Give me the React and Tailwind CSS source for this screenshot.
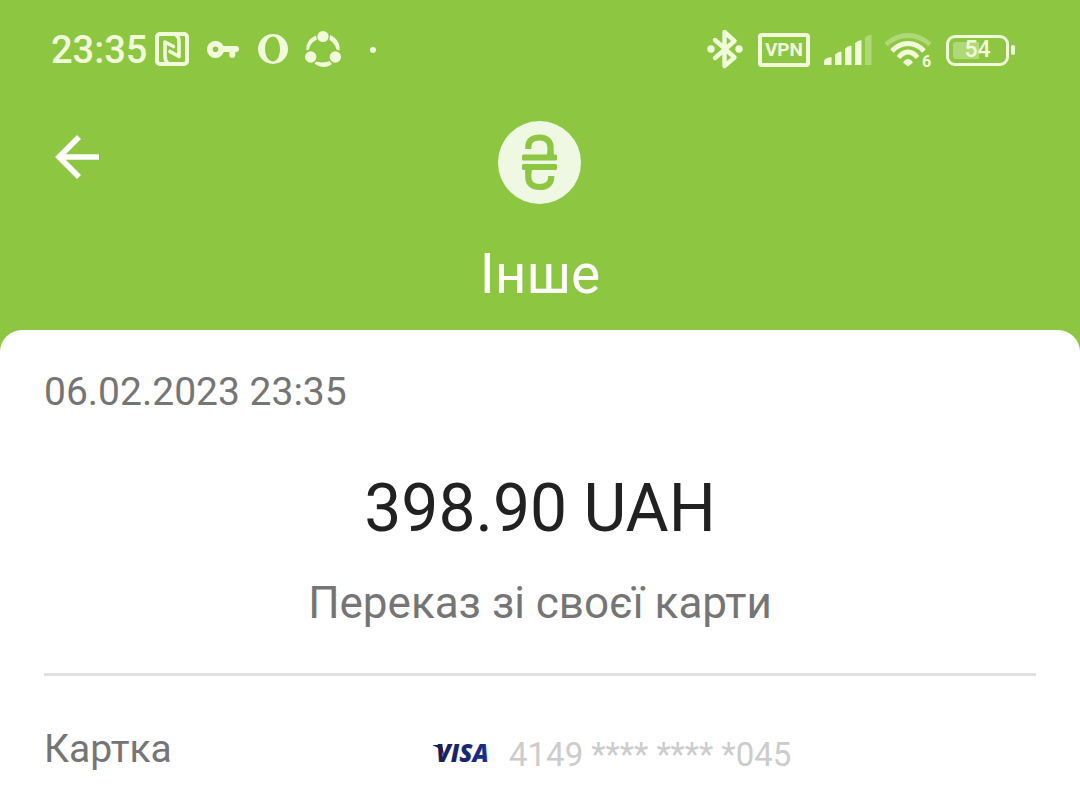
import React from "react";

const ink = "#f1fbdc";

function StatusIcon({ label, box, className, children }) {
  return (
    <svg role="img" aria-label={label} viewBox={box} className={`h-11 shrink-0 ${className}`} fill="none">
      {children}
    </svg>
  );
}

function StatusBar() {
  return (
    <div className="flex h-11 items-center justify-between pl-[51px] pr-[65px] text-[#f1fbdc]">
      <div className="flex items-center">
        <time className="mr-2 text-[38px] leading-11 font-medium">23:35</time>
        <StatusIcon label="NFC" box="155 28 34 44" className="w-[34px]">
          <g stroke={ink} strokeWidth="4" strokeLinejoin="round" strokeLinecap="round">
            <rect x="157" y="34" width="30" height="30" rx="3" />
            <path
              strokeWidth="3.600"
              d="M173.500 46.500L165 42V56Q165 61 168 63.500M170 51.500L179 56.500V42Q179 37 176 34.500"
            />
          </g>
        </StatusIcon>
        <StatusIcon label="Key" box="207 28 32 44" className="ml-[18px] w-8">
          <circle cx="215.500" cy="49.300" r="5.700" stroke={ink} strokeWidth="5.800" />
          <path d="M222 49H236M232.300 50V55" stroke={ink} strokeWidth="6" strokeLinecap="round" />
        </StatusIcon>
        <StatusIcon label="Opera" box="258 28 30 44" className="ml-[19px] w-[30px]">
          <path
            fill={ink}
            fillRule="evenodd"
            d="M273 34a15 15 0 1 0 0 30a15 15 0 1 0 0-30ZM273.500 36.500C277.800 37.500 280 43 280 49S277.800 60.500 273.500 61.500C268.500 61.500 265 56 265 49S268.500 36.500 273.500 36.500Z"
          />
        </StatusIcon>
        <StatusIcon label="Sharing" box="305 28 36 44" className="ml-[17px] w-9">
          <g fill={ink}>
            <circle cx="323" cy="36.500" r="5.600" />
            <circle cx="310.700" cy="57" r="5.700" />
            <circle cx="335.300" cy="57" r="5.700" />
            <path d="M316 35.500C309 38.500 305.500 44 306.500 50.500L309 49.500C310 45 312 42 317 39.500Z" />
            <path d="M330 35C337 38 340.500 44 339.500 50.500L336.500 49.500C335.500 45.500 333.500 42.500 329.500 40Z" />
            <path d="M314.500 63.500C320 68 327 68 332 64L329.500 61C325 62.800 321 62.800 316.500 61.500Z" />
          </g>
        </StatusIcon>
        <span className="ml-[29px] size-1.5 rounded-full bg-[#f1fbdc]" />
      </div>

      <div className="flex items-center">
        <StatusIcon label="Bluetooth" box="707 28 36 44" className="w-9">
          <path
            d="M715 40L734.500 57.500L724.500 66V32L734.500 41L715 58"
            stroke={ink}
            strokeWidth="4.400"
            strokeLinejoin="round"
            strokeLinecap="round"
          />
          <circle cx="711" cy="49" r="3.700" fill={ink} />
          <circle cx="739" cy="49" r="3.700" fill={ink} />
        </StatusIcon>
        <span className="ml-[15px] flex h-[34px] w-[52px] items-center justify-center rounded-[4px] border-4 border-[#f1fbdc] text-[19px] leading-6 font-bold">
          VPN
        </span>
        <StatusIcon label="Signal strength" box="824 28 48 44" className="ml-3.5 w-12">
          <g fill={ink}>
            <path d="M824 65V61Q825 57.500 831.500 57V65Z" />
            <path d="M835 65V54.500L837 53Q839 51.500 841.500 51.500V65Z" />
            <path d="M845 65V48.500Q848 46 851.500 45.500V65Z" />
            <path d="M855 65V43Q858 40.500 861.500 40V65Z" />
            <path d="M865 65V37.500Q868 35 871.500 34.500V65Z" opacity="0.35" />
          </g>
        </StatusIcon>
        <StatusIcon label="Wi-Fi 6" box="885 28 47 44" className="ml-[13px] w-[47px]">
          <g stroke={ink} strokeWidth="4.800">
            <path d="M886 44.500Q896 35.500 908 35.500T930 44.500" opacity="0.35" />
            <path d="M892 51Q899 43.500 908 43.500T924 51" />
            <path d="M898.500 57.500Q903 52 908 52T917.500 57.500" />
          </g>
          <path d="M903 62.500Q905 59 908 59T913 62.500L908 66.500Z" fill={ink} />
          <text x="922" y="67" fill={ink} fontFamily="Roboto, sans-serif" fontSize="16" fontWeight="700">
            6
          </text>
        </StatusIcon>
        <div className="ml-3.5 flex items-center gap-0.5">
          <span className="flex h-[31px] w-[63px] rounded-[9px] border-[3px] border-[#f1fbdc] p-1">
            <span className="flex w-full items-center justify-center rounded-[3px] bg-linear-to-r from-[#f1fbdc]/35 from-54% to-transparent to-54% text-[23px] leading-5 font-medium">
              54
            </span>
          </span>
          <span className="h-[10px] w-1 rounded-full bg-[#f1fbdc]" />
        </div>
      </div>
    </div>
  );
}

function HryvniaBadge() {
  return (
    <svg role="img" aria-label="Hryvnia" viewBox="498 121 84 84" className="size-[84px]" fill="none">
      <circle cx="539.500" cy="162.500" r="41.500" fill="#eff8e3" />
      <g stroke="#8dc641" strokeWidth="6.200">
        <path d="M528.300 149V147C528.300 140.500 532.500 137.500 539.500 137.500S550.500 141 550.500 147.500V157" />
        <path d="M528.300 167V177C528.300 183.500 532.500 187 539.500 187S551.200 183.500 551.200 177.500V176" />
      </g>
      <path d="M545 156Q548 154 547.500 151H553.500V156ZM534 168Q531 170 531.500 173H525.500V168Z" fill="#8dc641" />
      <rect x="522" y="154.500" width="35" height="6" rx="1.500" fill="#8dc641" />
      <rect x="522" y="164" width="35" height="6" rx="1.500" fill="#8dc641" />
    </svg>
  );
}

function VisaLogo() {
  return (
    <svg role="img" aria-label="Visa" viewBox="0 0 60 40" className="h-10 w-15">
      <defs>
        <linearGradient id="visa" gradientUnits="userSpaceOnUse" x1="0" y1="0" x2="56" y2="0">
          <stop offset="0" stopColor="#1d1b4c" />
          <stop offset="1" stopColor="#16318f" />
        </linearGradient>
      </defs>
      <path d="M0 10H7Q9 10.200 9.500 12L11.500 22Q8.500 13 0 10.500Z" fill="url(#visa)" />
      <text
        x="3"
        y="27"
        fill="url(#visa)"
        fontFamily="'Open Sans', sans-serif"
        fontSize="24"
        fontStyle="italic"
        fontWeight="800"
      >
        VISA
      </text>
    </svg>
  );
}

export default function App() {
  return (
    <div className="flex min-h-screen flex-col bg-[#8dc641] font-[Roboto,sans-serif]">
      <header className="pt-7 pb-6">
        <StatusBar />
        <div className="mt-[49px] grid grid-cols-[1fr_auto_1fr] items-start px-[54px]">
          <button type="button" aria-label="Назад" className="mt-3 w-12 text-white">
            <svg viewBox="54 133 48 48" className="size-12" fill="none" stroke="currentColor" strokeWidth="5.600">
              <path d="M99 157H59M79 137L59 157L79 177" />
            </svg>
          </button>
          <HryvniaBadge />
        </div>
        <h1 className="mt-[37px] text-center text-[55px] leading-16 text-white">Інше</h1>
      </header>

      <main className="grow rounded-t-[22px] bg-white px-11 pt-[38px]">
        <time className="block text-[39px] leading-12 text-[#757575]">06.02.2023 23:35</time>
        <p className="mt-[53px] text-center text-[66px] leading-20 text-[#212121]">398.90 UAH</p>
        <p className="mt-7 text-center text-[44px] leading-13 text-[#757575]">Переказ зі своєї карти</p>
        <hr className="mt-11 border-t-[3px] border-[#e0e0e0]" />
        <dl className="mt-[49px] grid grid-cols-[389px_1fr] text-[39px] leading-12">
          <dt className="text-[#757575]">Картка</dt>
          <dd className="flex items-center gap-4 pt-1.5 text-[33px] text-[#cccccc]">
            <VisaLogo />
            <span>4149 **** **** *045</span>
          </dd>
        </dl>
      </main>
    </div>
  );
}
